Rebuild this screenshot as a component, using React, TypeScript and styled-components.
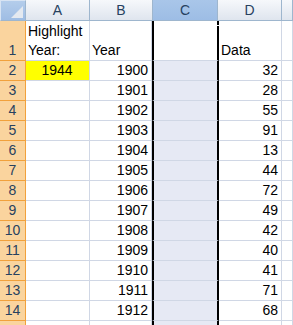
import React from "react";
import styled, { createGlobalStyle } from "styled-components";

const GlobalStyle = createGlobalStyle`
  html, body {
    margin: 0;
    padding: 0;
    background: #ffffff;
  }
  body {
    font-family: "Liberation Sans", Arial, sans-serif;
    font-size: 14px;
    overflow: hidden;
  }
`;

const COLS = "26px 64px 62px 67px 63px 1fr";

const Sheet = styled.div`
  width: 293px;
  height: 325px;
  overflow: hidden;
  background: #ffffff;
`;

const HeaderRow = styled.div`
  display: grid;
  grid-template-columns: 26px 64px 63px 65px 64px 1fr;
  height: 21px;
`;

const Corner = styled.div`
  position: relative;
  box-sizing: border-box;
  background: linear-gradient(#b4cdeb, #9fbde4);
  border: 1px solid #d8e4f3;
  border-right: 1px solid #9eb6ce;
  border-bottom: 1px solid #9eb6ce;
  height: 21px;
`;

const CornerMark = styled.svg`
  position: absolute;
  right: 1px;
  bottom: 1px;
`;

const ColHead = styled.div<{ $active?: boolean }>`
  box-sizing: border-box;
  height: 21px;
  display: flex;
  align-items: center;
  justify-content: center;
  color: #27415f;
  font-size: 14px;
  background: ${(p) =>
    p.$active
      ? "linear-gradient(#a9c6e9, #9dbde5)"
      : "linear-gradient(#f6f8fb, #dfe5ee)"};
  border-right: 1px solid #9eb6ce;
  border-bottom: 1px solid #9eb6ce;
`;

const Row = styled.div<{ $h: number }>`
  display: grid;
  grid-template-columns: ${COLS};
  height: ${(p) => p.$h}px;
`;

const RowHead = styled.div`
  box-sizing: border-box;
  background: #fad49e;
  border-right: 1px solid #f1a13c;
  border-bottom: 1px solid #f1a13c;
  color: #27415f;
  display: flex;
  align-items: flex-end;
  justify-content: center;
  line-height: 19px;
  font-size: 14px;
`;

const Cell = styled.div<{
  $align?: "left" | "right" | "center";
  $fill?: string;
}>`
  box-sizing: border-box;
  border-right: 1px solid #d0d7e5;
  border-bottom: 1px solid #d0d7e5;
  background: ${(p) => p.$fill || "#ffffff"};
  display: flex;
  flex-direction: column;
  justify-content: flex-end;
  text-align: ${(p) => p.$align || "left"};
  padding: 0 3px 0 2px;
  line-height: 19px;
  color: #000000;
  white-space: nowrap;
  overflow: hidden;
`;

const CutCell = styled.div<{ $fill: string }>`
  position: relative;
  box-sizing: border-box;
  border-left: 2px solid #000000;
  border-right: 2px solid #000000;
  border-bottom: 1px solid #d0d7e5;
  background: ${(p) => p.$fill};
`;

const Gap = styled.span`
  position: absolute;
  right: -2px;
  top: 4px;
  width: 2px;
  height: 1px;
  background: #ffffff;
`;

const years = [
  [1900, 32],
  [1901, 28],
  [1902, 55],
  [1903, 91],
  [1904, 13],
  [1905, 44],
  [1906, 72],
  [1907, 49],
  [1908, 42],
  [1909, 40],
  [1910, 41],
  [1911, 71],
  [1912, 68],
];

export default function App() {
  return (
    <Sheet>
      <GlobalStyle />
      <HeaderRow>
        <Corner>
          <CornerMark width="13" height="13" viewBox="0 0 13 13">
            <polygon points="12,0 12,12 0,12" fill="#e4e9f0" />
          </CornerMark>
        </Corner>
        <ColHead>A</ColHead>
        <ColHead>B</ColHead>
        <ColHead $active>C</ColHead>
        <ColHead>D</ColHead>
        <ColHead />
      </HeaderRow>

      <Row $h={40}>
        <RowHead>1</RowHead>
        <Cell>
          <div>Highlight</div>
          <div>Year:</div>
        </Cell>
        <Cell>Year</Cell>
        <CutCell $fill="#ffffff">
          <Gap />
        </CutCell>
        <Cell>Data</Cell>
        <Cell />
      </Row>

      {years.map(([year, value], i) => (
        <Row $h={20} key={year}>
          <RowHead>{i + 2}</RowHead>
          {i === 0 ? (
            <Cell $align="center" $fill="#ffff00">
              1944
            </Cell>
          ) : (
            <Cell />
          )}
          <Cell $align="right">{year}</Cell>
          <CutCell $fill="#e6e9f4" />
          <Cell $align="right">{value}</Cell>
          <Cell />
        </Row>
      ))}

      <Row $h={20}>
        <RowHead />
        <Cell />
        <Cell />
        <CutCell $fill="#e6e9f4" />
        <Cell />
        <Cell />
      </Row>
    </Sheet>
  );
}
